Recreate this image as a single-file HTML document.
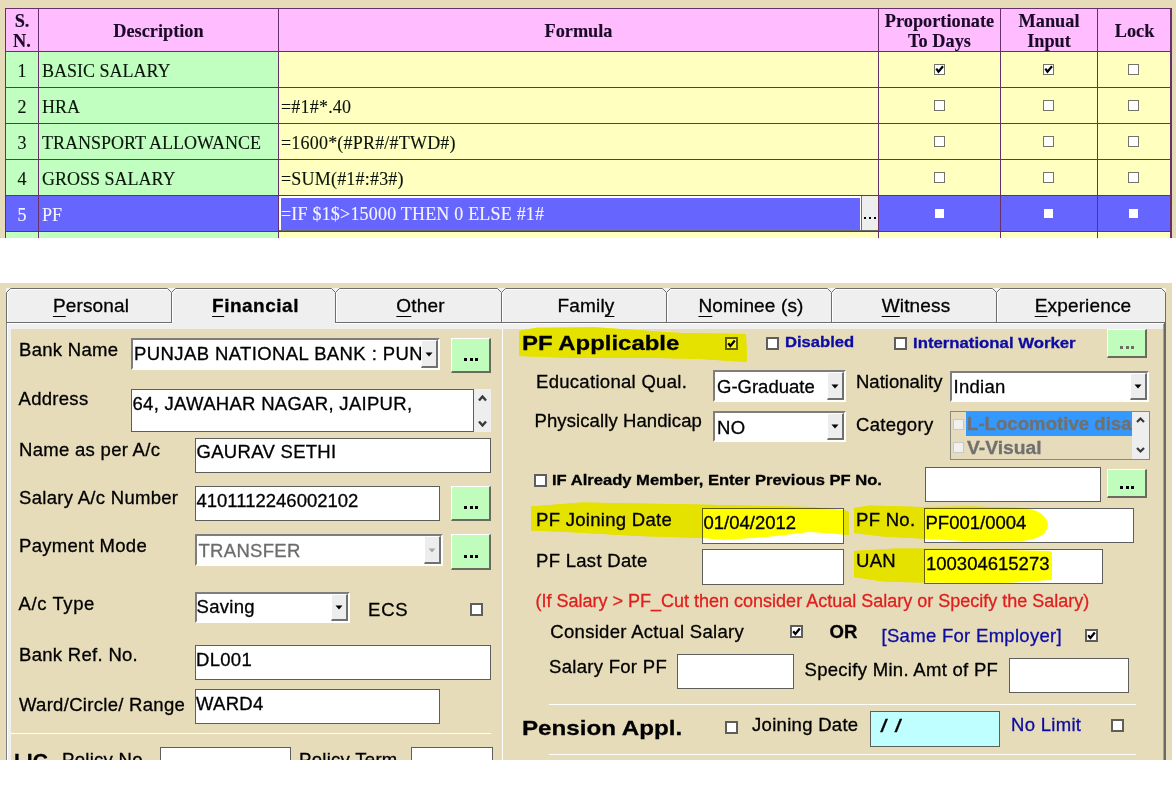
<!DOCTYPE html>
<html><head><meta charset="utf-8"><style>
html,body{margin:0;padding:0;}
body{width:1176px;height:788px;overflow:hidden;position:relative;background:#fff;}
.a{position:absolute;}
.t{position:absolute;white-space:nowrap;-webkit-text-stroke:0.3px currentColor;}
u{text-decoration:underline;text-underline-offset:3.5px;text-decoration-thickness:1.2px;}
</style></head><body>
<div class="a" style="left:0px;top:0px;width:1176px;height:238px;background:#E6DCBA;"></div>
<div class="a" style="left:5px;top:8px;width:1166px;height:43px;background:#FFBCFF;"></div>
<div class="a" style="left:5px;top:51px;width:273px;height:36px;background:#C0FFC0;"></div>
<div class="a" style="left:278px;top:51px;width:893px;height:36px;background:#FFFFC0;"></div>
<div class="a" style="left:5px;top:87px;width:273px;height:36px;background:#C0FFC0;"></div>
<div class="a" style="left:278px;top:87px;width:893px;height:36px;background:#FFFFC0;"></div>
<div class="a" style="left:5px;top:123px;width:273px;height:36px;background:#C0FFC0;"></div>
<div class="a" style="left:278px;top:123px;width:893px;height:36px;background:#FFFFC0;"></div>
<div class="a" style="left:5px;top:159px;width:273px;height:36px;background:#C0FFC0;"></div>
<div class="a" style="left:278px;top:159px;width:893px;height:36px;background:#FFFFC0;"></div>
<div class="a" style="left:5px;top:195px;width:1166px;height:36px;background:#6666FF;"></div>
<div class="a" style="left:5px;top:231px;width:273px;height:7px;background:#C0FFC0;"></div>
<div class="a" style="left:278px;top:231px;width:893px;height:7px;background:#FFFFC0;"></div>
<div class="a" style="left:5px;top:8px;width:1167px;height:1px;background:#683068;"></div>
<div class="a" style="left:5px;top:51px;width:1167px;height:1px;background:#683068;"></div>
<div class="a" style="left:5px;top:87px;width:1167px;height:1px;background:#683068;"></div>
<div class="a" style="left:5px;top:123px;width:1167px;height:1px;background:#683068;"></div>
<div class="a" style="left:5px;top:159px;width:1167px;height:1px;background:#683068;"></div>
<div class="a" style="left:5px;top:195px;width:1167px;height:1px;background:#683068;"></div>
<div class="a" style="left:5px;top:231px;width:1167px;height:1px;background:#683068;"></div>
<div class="a" style="left:5px;top:8px;width:1px;height:230px;background:#683068;"></div>
<div class="a" style="left:38px;top:8px;width:1px;height:230px;background:#683068;"></div>
<div class="a" style="left:278px;top:8px;width:1px;height:230px;background:#683068;"></div>
<div class="a" style="left:878px;top:8px;width:1px;height:230px;background:#683068;"></div>
<div class="a" style="left:1000px;top:8px;width:1px;height:230px;background:#683068;"></div>
<div class="a" style="left:1097px;top:8px;width:1px;height:230px;background:#683068;"></div>
<div class="a" style="left:1170px;top:8px;width:2px;height:230px;background:#683068;"></div>
<div class="t" style="top:11.68px;font-family:'Liberation Serif', serif;font-size:18.3px;line-height:18.3px;color:#1A0A28;font-weight:bold;left:5px;width:34px;text-align:center;-webkit-text-stroke:0.12px currentColor;">S.</div>
<div class="t" style="top:31.68px;font-family:'Liberation Serif', serif;font-size:18.3px;line-height:18.3px;color:#1A0A28;font-weight:bold;left:5px;width:34px;text-align:center;-webkit-text-stroke:0.12px currentColor;">N.</div>
<div class="t" style="top:21.68px;font-family:'Liberation Serif', serif;font-size:18.3px;line-height:18.3px;color:#1A0A28;font-weight:bold;left:38px;width:241px;text-align:center;-webkit-text-stroke:0.12px currentColor;">Description</div>
<div class="t" style="top:21.68px;font-family:'Liberation Serif', serif;font-size:18.3px;line-height:18.3px;color:#1A0A28;font-weight:bold;left:278px;width:601px;text-align:center;-webkit-text-stroke:0.12px currentColor;">Formula</div>
<div class="t" style="top:11.68px;font-family:'Liberation Serif', serif;font-size:18.3px;line-height:18.3px;color:#1A0A28;font-weight:bold;left:878px;width:123px;text-align:center;-webkit-text-stroke:0.12px currentColor;">Proportionate</div>
<div class="t" style="top:31.68px;font-family:'Liberation Serif', serif;font-size:18.3px;line-height:18.3px;color:#1A0A28;font-weight:bold;left:878px;width:123px;text-align:center;-webkit-text-stroke:0.12px currentColor;">To Days</div>
<div class="t" style="top:11.68px;font-family:'Liberation Serif', serif;font-size:18.3px;line-height:18.3px;color:#1A0A28;font-weight:bold;left:1000px;width:98px;text-align:center;-webkit-text-stroke:0.12px currentColor;">Manual</div>
<div class="t" style="top:31.68px;font-family:'Liberation Serif', serif;font-size:18.3px;line-height:18.3px;color:#1A0A28;font-weight:bold;left:1000px;width:98px;text-align:center;-webkit-text-stroke:0.12px currentColor;">Input</div>
<div class="t" style="top:21.68px;font-family:'Liberation Serif', serif;font-size:18.3px;line-height:18.3px;color:#1A0A28;font-weight:bold;left:1097px;width:75px;text-align:center;-webkit-text-stroke:0.12px currentColor;">Lock</div>
<div class="t" style="top:61.93px;font-family:'Liberation Serif', serif;font-size:18px;line-height:18px;color:#0A140A;left:5px;width:34px;text-align:center;-webkit-text-stroke:0.12px currentColor;">1</div>
<div class="t" style="top:61.93px;font-family:'Liberation Serif', serif;font-size:18px;line-height:18px;color:#0A140A;left:42px;-webkit-text-stroke:0.12px currentColor;">BASIC SALARY</div>
<div class="t" style="top:97.93px;font-family:'Liberation Serif', serif;font-size:18px;line-height:18px;color:#0A140A;left:5px;width:34px;text-align:center;-webkit-text-stroke:0.12px currentColor;">2</div>
<div class="t" style="top:97.93px;font-family:'Liberation Serif', serif;font-size:18px;line-height:18px;color:#0A140A;left:42px;-webkit-text-stroke:0.12px currentColor;">HRA</div>
<div class="t" style="top:97.93px;font-family:'Liberation Serif', serif;font-size:18px;line-height:18px;color:#0A140A;letter-spacing:0.2px;left:281px;-webkit-text-stroke:0.12px currentColor;">=#1#*.40</div>
<div class="t" style="top:133.93px;font-family:'Liberation Serif', serif;font-size:18px;line-height:18px;color:#0A140A;left:5px;width:34px;text-align:center;-webkit-text-stroke:0.12px currentColor;">3</div>
<div class="t" style="top:133.93px;font-family:'Liberation Serif', serif;font-size:18px;line-height:18px;color:#0A140A;left:42px;-webkit-text-stroke:0.12px currentColor;">TRANSPORT ALLOWANCE</div>
<div class="t" style="top:133.93px;font-family:'Liberation Serif', serif;font-size:18px;line-height:18px;color:#0A140A;letter-spacing:0.2px;left:281px;-webkit-text-stroke:0.12px currentColor;">=1600*(#PR#/#TWD#)</div>
<div class="t" style="top:169.93px;font-family:'Liberation Serif', serif;font-size:18px;line-height:18px;color:#0A140A;left:5px;width:34px;text-align:center;-webkit-text-stroke:0.12px currentColor;">4</div>
<div class="t" style="top:169.93px;font-family:'Liberation Serif', serif;font-size:18px;line-height:18px;color:#0A140A;left:42px;-webkit-text-stroke:0.12px currentColor;">GROSS SALARY</div>
<div class="t" style="top:169.93px;font-family:'Liberation Serif', serif;font-size:18px;line-height:18px;color:#0A140A;letter-spacing:0.2px;left:281px;-webkit-text-stroke:0.12px currentColor;">=SUM(#1#:#3#)</div>
<div class="a" style="left:934px;top:64px;width:11px;height:11px;background:#FFFFFF;box-sizing:border-box;border:1px solid #747468;"></div>
<svg class="a" style="left:934px;top:64px" width="11" height="11" viewBox="0 0 11 11"><path d="M2.3 4.6 L4.5 7.6 L9 2.2" fill="none" stroke="#000" stroke-width="2.2"/></svg>
<div class="a" style="left:1043px;top:64px;width:11px;height:11px;background:#FFFFFF;box-sizing:border-box;border:1px solid #747468;"></div>
<svg class="a" style="left:1043px;top:64px" width="11" height="11" viewBox="0 0 11 11"><path d="M2.3 4.6 L4.5 7.6 L9 2.2" fill="none" stroke="#000" stroke-width="2.2"/></svg>
<div class="a" style="left:1128px;top:64px;width:11px;height:11px;background:#FFFFFF;box-sizing:border-box;border:1px solid #747468;"></div>
<div class="a" style="left:934px;top:100px;width:11px;height:11px;background:#FFFFFF;box-sizing:border-box;border:1px solid #747468;"></div>
<div class="a" style="left:1043px;top:100px;width:11px;height:11px;background:#FFFFFF;box-sizing:border-box;border:1px solid #747468;"></div>
<div class="a" style="left:1128px;top:100px;width:11px;height:11px;background:#FFFFFF;box-sizing:border-box;border:1px solid #747468;"></div>
<div class="a" style="left:934px;top:136px;width:11px;height:11px;background:#FFFFFF;box-sizing:border-box;border:1px solid #747468;"></div>
<div class="a" style="left:1043px;top:136px;width:11px;height:11px;background:#FFFFFF;box-sizing:border-box;border:1px solid #747468;"></div>
<div class="a" style="left:1128px;top:136px;width:11px;height:11px;background:#FFFFFF;box-sizing:border-box;border:1px solid #747468;"></div>
<div class="a" style="left:934px;top:172px;width:11px;height:11px;background:#FFFFFF;box-sizing:border-box;border:1px solid #747468;"></div>
<div class="a" style="left:1043px;top:172px;width:11px;height:11px;background:#FFFFFF;box-sizing:border-box;border:1px solid #747468;"></div>
<div class="a" style="left:1128px;top:172px;width:11px;height:11px;background:#FFFFFF;box-sizing:border-box;border:1px solid #747468;"></div>
<div class="a" style="left:935px;top:209px;width:9px;height:9px;background:#FFFFFF;"></div>
<div class="a" style="left:1044px;top:209px;width:9px;height:9px;background:#FFFFFF;"></div>
<div class="a" style="left:1129px;top:209px;width:9px;height:9px;background:#FFFFFF;"></div>
<div class="t" style="top:205.93px;font-family:'Liberation Serif', serif;font-size:18px;line-height:18px;color:#F4F4FF;left:5px;width:34px;text-align:center;-webkit-text-stroke:0.12px currentColor;">5</div>
<div class="t" style="top:205.93px;font-family:'Liberation Serif', serif;font-size:18px;line-height:18px;color:#F4F4FF;left:42px;-webkit-text-stroke:0.12px currentColor;">PF</div>
<div class="a" style="left:279px;top:196px;width:582px;height:2px;background:#FFFFFF;"></div>
<div class="a" style="left:279px;top:196px;width:2px;height:35px;background:#FFFFFF;"></div>
<div class="a" style="left:279px;top:230px;width:599px;height:1px;background:#6A6A6A;"></div>
<div class="a" style="left:860px;top:196px;width:1px;height:34px;background:#FFFFFF;"></div>
<div class="a" style="left:861px;top:196px;width:1px;height:35px;background:#707070;"></div>
<div class="a" style="left:862px;top:196px;width:16px;height:34px;background:#EEEEEE;"></div>
<div class="a" style="left:864px;top:217px;width:2px;height:2px;background:#000;"></div>
<div class="a" style="left:869px;top:217px;width:2px;height:2px;background:#000;"></div>
<div class="a" style="left:874px;top:217px;width:2px;height:2px;background:#000;"></div>
<div class="t" style="top:204.93px;font-family:'Liberation Serif', serif;font-size:18px;line-height:18px;color:#F4F4FF;letter-spacing:0.2px;left:281px;-webkit-text-stroke:0.12px currentColor;">=IF $1$&gt;15000 THEN 0 ELSE #1#</div>
<div class="a" style="left:0px;top:283px;width:1172px;height:477px;background:#E6DCBA;"></div>
<div class="a" style="left:6px;top:322px;width:1160px;height:438px;background:#808080;"></div>
<div class="a" style="left:7px;top:323px;width:1157px;height:437px;background:#FFFFFF;"></div>
<div class="a" style="left:8px;top:324px;width:1155px;height:436px;background:#F0F0F0;"></div>
<div class="a" style="left:1163px;top:324px;width:2px;height:436px;background:#A0A0A0;"></div>
<div class="a" style="left:1164px;top:322px;width:2px;height:438px;background:#6A6A6A;"></div>
<div class="a" style="left:11px;top:329px;width:1152px;height:431px;background:#E6DCBA;"></div>
<svg class="a" style="left:0;top:0" width="1176" height="788" viewBox="0 0 1176 788"><path d="M519 331 L536 327.7 L595 327.3 L680 333 L746 334 L747 362 L701 359 L659 358 L574 358 L519 356 Z" fill="#E6E200"/><path d="M531 506.4 L582 502.5 L696 504.5 L810 507 L844 510 L849 512 L849 535 L810 532 L767 537 L724 540 L702 538 L639 536 L568 532 L531 530.6 Z" fill="#E6E200"/><path d="M854 508 L870 505.5 L921 507 L972 506.5 L1023 508 Q1045 510 1048 524 Q1048 538 1023 541 L972 541.5 L921 538.4 L883 536.6 L854 533 Z" fill="#E6E200"/><path d="M854 551 L896 548.6 L972 549 L1049 551 L1052 552 L1052 580 L998 583.4 L921 582.5 L883 581.5 L854 577 Z" fill="#E6E200"/></svg>
<svg class="a" style="left:0;top:0" width="1176" height="340" viewBox="0 0 1176 340"><rect x="6" y="288" width="1160" height="5" fill="#F4F4F2"/><path d="M6.5 323 V292.5 L10.5 288.5 H167.5 L171.5 292.5 V322" fill="#EFEFEF" stroke="#6E6E6E" stroke-width="1"/><path d="M7.5 322 V293 L11 289.5 H167" fill="none" stroke="#FFFFFF" stroke-width="1"/><path d="M171.5 323 V292.5 L175.5 288.5 H331.5 L335.5 292.5 V322" fill="#EFEFEF" stroke="#6E6E6E" stroke-width="1"/><path d="M172.5 322 V293 L176 289.5 H331" fill="none" stroke="#FFFFFF" stroke-width="1"/><path d="M335.5 323 V292.5 L339.5 288.5 H497.5 L501.5 292.5 V322" fill="#EFEFEF" stroke="#6E6E6E" stroke-width="1"/><path d="M336.5 322 V293 L340 289.5 H497" fill="none" stroke="#FFFFFF" stroke-width="1"/><path d="M501.5 323 V292.5 L505.5 288.5 H662.5 L666.5 292.5 V322" fill="#EFEFEF" stroke="#6E6E6E" stroke-width="1"/><path d="M502.5 322 V293 L506 289.5 H662" fill="none" stroke="#FFFFFF" stroke-width="1"/><path d="M666.5 323 V292.5 L670.5 288.5 H827.5 L831.5 292.5 V322" fill="#EFEFEF" stroke="#6E6E6E" stroke-width="1"/><path d="M667.5 322 V293 L671 289.5 H827" fill="none" stroke="#FFFFFF" stroke-width="1"/><path d="M831.5 323 V292.5 L835.5 288.5 H992.5 L996.5 292.5 V322" fill="#EFEFEF" stroke="#6E6E6E" stroke-width="1"/><path d="M832.5 322 V293 L836 289.5 H992" fill="none" stroke="#FFFFFF" stroke-width="1"/><path d="M996.5 323 V292.5 L1000.5 288.5 H1161.5 L1165.5 292.5 V322" fill="#EFEFEF" stroke="#6E6E6E" stroke-width="1"/><path d="M997.5 322 V293 L1001 289.5 H1161" fill="none" stroke="#FFFFFF" stroke-width="1"/></svg>
<div class="a" style="left:6px;top:322px;width:166px;height:1px;background:#6E6E6E;"></div>
<div class="a" style="left:335px;top:322px;width:167px;height:1px;background:#6E6E6E;"></div>
<div class="a" style="left:501px;top:322px;width:166px;height:1px;background:#6E6E6E;"></div>
<div class="a" style="left:666px;top:322px;width:166px;height:1px;background:#6E6E6E;"></div>
<div class="a" style="left:831px;top:322px;width:166px;height:1px;background:#6E6E6E;"></div>
<div class="a" style="left:996px;top:322px;width:170px;height:1px;background:#6E6E6E;"></div>
<div class="a" style="left:172px;top:322px;width:163px;height:7px;background:#EFEFEF;"></div>
<div class="t" style="top:295.51px;font-family:'Liberation Sans', sans-serif;font-size:19px;line-height:19px;color:#000;letter-spacing:0.15px;left:8.5px;width:165px;text-align:center;"><u>P</u>ersonal</div>
<div class="t" style="top:295.51px;font-family:'Liberation Sans', sans-serif;font-size:19px;line-height:19px;color:#000;font-weight:bold;letter-spacing:0.5px;left:173.5px;width:164px;text-align:center;"><u>F</u>inancial</div>
<div class="t" style="top:295.51px;font-family:'Liberation Sans', sans-serif;font-size:19px;line-height:19px;color:#000;letter-spacing:0.15px;left:337.5px;width:166px;text-align:center;"><u>O</u>ther</div>
<div class="t" style="top:295.51px;font-family:'Liberation Sans', sans-serif;font-size:19px;line-height:19px;color:#000;letter-spacing:0.15px;left:503.5px;width:165px;text-align:center;">Famil<u>y</u></div>
<div class="t" style="top:295.51px;font-family:'Liberation Sans', sans-serif;font-size:19px;line-height:19px;color:#000;letter-spacing:0.15px;left:668.5px;width:165px;text-align:center;"><u>N</u>ominee (s)</div>
<div class="t" style="top:295.51px;font-family:'Liberation Sans', sans-serif;font-size:19px;line-height:19px;color:#000;letter-spacing:0.15px;left:833.5px;width:165px;text-align:center;"><u>W</u>itness</div>
<div class="t" style="top:295.51px;font-family:'Liberation Sans', sans-serif;font-size:19px;line-height:19px;color:#000;letter-spacing:0.15px;left:998.5px;width:169px;text-align:center;"><u>E</u>xperience</div>
<div class="a" style="left:502px;top:329px;width:1px;height:431px;background:#FFFFFF;"></div>
<div class="t" style="top:340.64px;font-family:'Liberation Sans', sans-serif;font-size:18.5px;line-height:18.5px;color:#000;letter-spacing:0.3px;left:19px;">Bank Name</div>
<div class="a" style="left:131px;top:338px;width:309px;height:32px;box-sizing:border-box;background:#fff;border-style:solid;border-width:2px;border-color:#7E7E7E #FFFFFF #FFFFFF #7E7E7E;"></div>
<div class="a" style="left:421px;top:340px;width:17px;height:28px;box-sizing:border-box;background:#EDEDED;border-style:solid;border-width:1px 2px 2px 1px;border-color:#FFFFFF #707070 #707070 #FFFFFF;"></div>
<svg class="a" style="left:425.0px;top:351.5px" width="8" height="5" viewBox="0 0 8 5"><path d="M0.5 0.5 H7.5 L4 4.5 Z" fill="#000"/></svg>
<div class="t" style="left:134px;top:342px;width:287px;height:24px;overflow:hidden;font-family:'Liberation Sans', sans-serif;font-size:18.5px;line-height:24px;letter-spacing:0.4px;">PUNJAB NATIONAL BANK : PUNJAB</div>
<div class="a" style="left:451px;top:338px;width:40px;height:35px;box-sizing:border-box;background:#C0FCBC;border-style:solid;border-width:1px 2px 2px 1px;border-color:#FFFFFF #6A6A60 #6A6A60 #FFFFFF;"></div>
<div class="a" style="left:464px;top:358px;width:3px;height:3px;background:#000;"></div>
<div class="a" style="left:470px;top:358px;width:3px;height:3px;background:#000;"></div>
<div class="a" style="left:475px;top:358px;width:3px;height:3px;background:#000;"></div>
<div class="t" style="top:390.14px;font-family:'Liberation Sans', sans-serif;font-size:18.5px;line-height:18.5px;color:#000;letter-spacing:0.3px;left:18.5px;">Address</div>
<div class="a" style="left:131px;top:389px;width:343px;height:43px;background:#FFFFFF;box-sizing:border-box;border:1px solid #5E5E5E;"></div>
<div class="a" style="left:474px;top:389px;width:17px;height:43px;background:#EEEEEE;"></div>
<svg class="a" style="left:478px;top:393px" width="9" height="36" viewBox="0 0 9 36"><path d="M1 7.5 L4.5 3.5 L8 7.5" fill="none" stroke="#383838" stroke-width="2.4"/><path d="M1 28.5 L4.5 32.5 L8 28.5" fill="none" stroke="#383838" stroke-width="2.4"/></svg>
<div class="t" style="top:394.64px;font-family:'Liberation Sans', sans-serif;font-size:18.5px;line-height:18.5px;color:#000;letter-spacing:0.3px;left:132.5px;">64, JAWAHAR NAGAR, JAIPUR,</div>
<div class="t" style="top:440.64px;font-family:'Liberation Sans', sans-serif;font-size:18.5px;line-height:18.5px;color:#000;letter-spacing:0.3px;left:19px;">Name as per A/c</div>
<div class="a" style="left:195px;top:438px;width:296px;height:35px;background:#FFFFFF;box-sizing:border-box;border:1px solid #5E5E5E;"></div>
<div class="t" style="top:443.14px;font-family:'Liberation Sans', sans-serif;font-size:18.5px;line-height:18.5px;color:#000;letter-spacing:0.3px;left:196.5px;">GAURAV SETHI</div>
<div class="t" style="top:489.14px;font-family:'Liberation Sans', sans-serif;font-size:18.5px;line-height:18.5px;color:#000;letter-spacing:0.3px;left:19px;">Salary A/c Number</div>
<div class="a" style="left:195px;top:486px;width:245px;height:35px;background:#FFFFFF;box-sizing:border-box;border:1px solid #5E5E5E;"></div>
<div class="t" style="top:491.64px;font-family:'Liberation Sans', sans-serif;font-size:18.5px;line-height:18.5px;color:#000;left:196.5px;">4101112246002102</div>
<div class="a" style="left:451px;top:486px;width:40px;height:35px;box-sizing:border-box;background:#C0FCBC;border-style:solid;border-width:1px 2px 2px 1px;border-color:#FFFFFF #6A6A60 #6A6A60 #FFFFFF;"></div>
<div class="a" style="left:464px;top:506px;width:3px;height:3px;background:#000;"></div>
<div class="a" style="left:470px;top:506px;width:3px;height:3px;background:#000;"></div>
<div class="a" style="left:475px;top:506px;width:3px;height:3px;background:#000;"></div>
<div class="t" style="top:537.14px;font-family:'Liberation Sans', sans-serif;font-size:18.5px;line-height:18.5px;color:#000;letter-spacing:0.3px;left:19px;">Payment Mode</div>
<div class="a" style="left:195px;top:534px;width:248px;height:32px;box-sizing:border-box;background:#fff;border-style:solid;border-width:2px;border-color:#7E7E7E #FFFFFF #FFFFFF #7E7E7E;"></div>
<div class="a" style="left:424px;top:536px;width:17px;height:28px;box-sizing:border-box;background:#EDEDED;border-style:solid;border-width:1px 2px 2px 1px;border-color:#FFFFFF #707070 #707070 #FFFFFF;"></div>
<svg class="a" style="left:428.0px;top:547.5px" width="8" height="5" viewBox="0 0 8 5"><path d="M0.5 0.5 H7.5 L4 4.5 Z" fill="#A8A8A8"/></svg>
<div class="t" style="top:541.64px;font-family:'Liberation Sans', sans-serif;font-size:18.5px;line-height:18.5px;color:#6C6C6C;letter-spacing:0.3px;left:198.5px;">TRANSFER</div>
<div class="a" style="left:451px;top:534px;width:40px;height:36px;box-sizing:border-box;background:#C0FCBC;border-style:solid;border-width:1px 2px 2px 1px;border-color:#FFFFFF #6A6A60 #6A6A60 #FFFFFF;"></div>
<div class="a" style="left:464px;top:555px;width:3px;height:3px;background:#000;"></div>
<div class="a" style="left:470px;top:555px;width:3px;height:3px;background:#000;"></div>
<div class="a" style="left:475px;top:555px;width:3px;height:3px;background:#000;"></div>
<div class="t" style="top:595.14px;font-family:'Liberation Sans', sans-serif;font-size:18.5px;line-height:18.5px;color:#000;letter-spacing:0.6px;left:18.5px;">A/c Type</div>
<div class="a" style="left:195px;top:592px;width:155px;height:31px;box-sizing:border-box;background:#fff;border-style:solid;border-width:2px;border-color:#7E7E7E #FFFFFF #FFFFFF #7E7E7E;"></div>
<div class="a" style="left:331px;top:594px;width:17px;height:27px;box-sizing:border-box;background:#EDEDED;border-style:solid;border-width:1px 2px 2px 1px;border-color:#FFFFFF #707070 #707070 #FFFFFF;"></div>
<svg class="a" style="left:335.0px;top:605.0px" width="8" height="5" viewBox="0 0 8 5"><path d="M0.5 0.5 H7.5 L4 4.5 Z" fill="#000"/></svg>
<div class="t" style="top:598.14px;font-family:'Liberation Sans', sans-serif;font-size:18.5px;line-height:18.5px;color:#000;letter-spacing:0.3px;left:196.5px;">Saving</div>
<div class="t" style="top:600.64px;font-family:'Liberation Sans', sans-serif;font-size:18.5px;line-height:18.5px;color:#000;letter-spacing:0.8px;left:368px;">ECS</div>
<div class="a" style="left:470px;top:603px;width:13px;height:13px;background:#FFFFFF;box-sizing:border-box;border:2px solid #5E5E5E;"></div>
<div class="t" style="top:646.14px;font-family:'Liberation Sans', sans-serif;font-size:18.5px;line-height:18.5px;color:#000;letter-spacing:0.3px;left:19px;">Bank Ref. No.</div>
<div class="a" style="left:195px;top:645px;width:296px;height:35px;background:#FFFFFF;box-sizing:border-box;border:1px solid #5E5E5E;"></div>
<div class="t" style="top:651.14px;font-family:'Liberation Sans', sans-serif;font-size:18.5px;line-height:18.5px;color:#000;letter-spacing:0.3px;left:196px;">DL001</div>
<div class="t" style="top:695.64px;font-family:'Liberation Sans', sans-serif;font-size:18.5px;line-height:18.5px;color:#000;letter-spacing:0.3px;left:19px;">Ward/Circle/ Range</div>
<div class="a" style="left:195px;top:689px;width:245px;height:35px;background:#FFFFFF;box-sizing:border-box;border:1px solid #5E5E5E;"></div>
<div class="t" style="top:694.64px;font-family:'Liberation Sans', sans-serif;font-size:18.5px;line-height:18.5px;color:#000;letter-spacing:0.3px;left:196px;">WARD4</div>
<div class="a" style="left:11px;top:733px;width:480px;height:1px;background:#FFFFFF;"></div>
<div class="t" style="top:750.02px;font-family:'Liberation Sans', sans-serif;font-size:21px;line-height:21px;color:#000;font-weight:bold;left:14px;">LIC</div>
<div class="t" style="top:750.64px;font-family:'Liberation Sans', sans-serif;font-size:18.5px;line-height:18.5px;color:#000;letter-spacing:0.3px;left:62px;">Policy No</div>
<div class="a" style="left:160px;top:747px;width:131px;height:43px;background:#FFFFFF;box-sizing:border-box;border:1px solid #5E5E5E;"></div>
<div class="t" style="top:750.64px;font-family:'Liberation Sans', sans-serif;font-size:18.5px;line-height:18.5px;color:#000;letter-spacing:0.3px;left:299px;">Policy Term</div>
<div class="a" style="left:411px;top:747px;width:82px;height:43px;background:#FFFFFF;box-sizing:border-box;border:1px solid #5E5E5E;"></div>
<div class="t" style="top:332.32px;font-family:'Liberation Sans', sans-serif;font-size:21px;line-height:21px;color:#000;font-weight:bold;transform:scaleX(1.139);transform-origin:0 0;left:522px;">PF Applicable</div>
<div class="a" style="left:725px;top:337px;width:13px;height:13px;background:#FFFFFF;box-sizing:border-box;border:2px solid #5E5E5E;"></div>
<svg class="a" style="left:725px;top:337px" width="13" height="13" viewBox="0 0 13 13"><path d="M3.2 6.2 L5.4 9 L9.8 3.6" fill="none" stroke="#000" stroke-width="2.3"/></svg>
<div class="a" style="left:766px;top:337px;width:13px;height:13px;background:#FFFFFF;box-sizing:border-box;border:2px solid #5E5E5E;"></div>
<div class="t" style="top:334.48px;font-family:'Liberation Sans', sans-serif;font-size:15.5px;line-height:15.5px;color:#0C0CA4;font-weight:bold;transform:scaleX(1.071);transform-origin:0 0;left:784.5px;">Disabled</div>
<div class="a" style="left:894px;top:337px;width:13px;height:13px;background:#FFFFFF;box-sizing:border-box;border:2px solid #5E5E5E;"></div>
<div class="t" style="top:334.68px;font-family:'Liberation Sans', sans-serif;font-size:15.5px;line-height:15.5px;color:#0C0CA4;font-weight:bold;transform:scaleX(1.081);transform-origin:0 0;left:912.5px;">International Worker</div>
<div class="a" style="left:1107px;top:329px;width:40px;height:29px;box-sizing:border-box;background:#C0FCBC;border-style:solid;border-width:1px 2px 2px 1px;border-color:#FFFFFF #6A6A60 #6A6A60 #FFFFFF;"></div>
<div class="a" style="left:1120px;top:346px;width:3px;height:3px;background:#6E6E60;"></div>
<div class="a" style="left:1126px;top:346px;width:3px;height:3px;background:#6E6E60;"></div>
<div class="a" style="left:1131px;top:346px;width:3px;height:3px;background:#6E6E60;"></div>
<div class="t" style="top:372.64px;font-family:'Liberation Sans', sans-serif;font-size:18.5px;line-height:18.5px;color:#000;letter-spacing:0.3px;left:536px;">Educational Qual.</div>
<div class="a" style="left:713px;top:370px;width:133px;height:32px;box-sizing:border-box;background:#fff;border-style:solid;border-width:2px;border-color:#7E7E7E #FFFFFF #FFFFFF #7E7E7E;"></div>
<div class="a" style="left:827px;top:372px;width:17px;height:28px;box-sizing:border-box;background:#EDEDED;border-style:solid;border-width:1px 2px 2px 1px;border-color:#FFFFFF #707070 #707070 #FFFFFF;"></div>
<svg class="a" style="left:831.0px;top:383.5px" width="8" height="5" viewBox="0 0 8 5"><path d="M0.5 0.5 H7.5 L4 4.5 Z" fill="#000"/></svg>
<div class="t" style="top:378.14px;font-family:'Liberation Sans', sans-serif;font-size:18.5px;line-height:18.5px;color:#000;left:717px;">G-Graduate</div>
<div class="t" style="top:373.14px;font-family:'Liberation Sans', sans-serif;font-size:18.5px;line-height:18.5px;color:#000;left:856px;">Nationality</div>
<div class="a" style="left:950px;top:371px;width:199px;height:31px;box-sizing:border-box;background:#fff;border-style:solid;border-width:2px;border-color:#7E7E7E #FFFFFF #FFFFFF #7E7E7E;"></div>
<div class="a" style="left:1130px;top:373px;width:17px;height:27px;box-sizing:border-box;background:#EDEDED;border-style:solid;border-width:1px 2px 2px 1px;border-color:#FFFFFF #707070 #707070 #FFFFFF;"></div>
<svg class="a" style="left:1134.0px;top:384.0px" width="8" height="5" viewBox="0 0 8 5"><path d="M0.5 0.5 H7.5 L4 4.5 Z" fill="#000"/></svg>
<div class="t" style="top:378.14px;font-family:'Liberation Sans', sans-serif;font-size:18.5px;line-height:18.5px;color:#000;letter-spacing:0.3px;left:953.5px;">Indian</div>
<div class="t" style="top:412.14px;font-family:'Liberation Sans', sans-serif;font-size:18.5px;line-height:18.5px;color:#000;letter-spacing:0.1px;left:534.5px;">Physically Handicap</div>
<div class="a" style="left:713px;top:411px;width:133px;height:31px;box-sizing:border-box;background:#fff;border-style:solid;border-width:2px;border-color:#7E7E7E #FFFFFF #FFFFFF #7E7E7E;"></div>
<div class="a" style="left:827px;top:413px;width:17px;height:27px;box-sizing:border-box;background:#EDEDED;border-style:solid;border-width:1px 2px 2px 1px;border-color:#FFFFFF #707070 #707070 #FFFFFF;"></div>
<svg class="a" style="left:831.0px;top:424.0px" width="8" height="5" viewBox="0 0 8 5"><path d="M0.5 0.5 H7.5 L4 4.5 Z" fill="#000"/></svg>
<div class="t" style="top:419.14px;font-family:'Liberation Sans', sans-serif;font-size:18.5px;line-height:18.5px;color:#000;letter-spacing:0.3px;left:717px;">NO</div>
<div class="t" style="top:415.64px;font-family:'Liberation Sans', sans-serif;font-size:18.5px;line-height:18.5px;color:#000;letter-spacing:0.3px;left:856px;">Category</div>
<div class="a" style="left:950px;top:411px;width:200px;height:49px;background:#E6DCBC;box-sizing:border-box;border:1px solid #8A8A80;"></div>
<div class="a" style="left:966px;top:412px;width:166px;height:24px;background:#3399FF;"></div>
<div class="a" style="left:1132px;top:412px;width:17px;height:47px;background:#EEEEEE;"></div>
<svg class="a" style="left:1136px;top:415px" width="9" height="42" viewBox="0 0 9 42"><path d="M1 7 L4.5 3.5 L8 7" fill="none" stroke="#383838" stroke-width="2.2"/><path d="M1 33 L4.5 36.5 L8 33" fill="none" stroke="#383838" stroke-width="2.2"/></svg>
<div class="a" style="left:953px;top:419px;width:11px;height:11px;background:#F0F0F0;box-sizing:border-box;border:1px solid #C8C8C8;"></div>
<div class="a" style="left:953px;top:442px;width:11px;height:11px;background:#F0F0F0;box-sizing:border-box;border:1px solid #C8C8C8;"></div>
<div class="a" style="left:966px;top:412px;width:166px;height:24px;overflow:hidden;"><div class="t" style="left:1px;top:0px;font-family:'Liberation Sans', sans-serif;font-size:18px;font-weight:bold;color:#707070;line-height:24px;transform:scaleX(1.035);transform-origin:0 0;">L-Locomotive disability</div></div>
<div class="t" style="top:439.26px;font-family:'Liberation Sans', sans-serif;font-size:18px;line-height:18px;color:#707070;font-weight:bold;transform:scaleX(1.07);transform-origin:0 0;left:967px;">V-Visual</div>
<div class="a" style="left:534px;top:474px;width:13px;height:13px;background:#FFFFFF;box-sizing:border-box;border:2px solid #5E5E5E;"></div>
<div class="t" style="top:471.58px;font-family:'Liberation Sans', sans-serif;font-size:15.5px;line-height:15.5px;color:#000;font-weight:bold;transform:scaleX(1.069);transform-origin:0 0;left:552px;">IF Already Member, Enter Previous PF No.</div>
<div class="a" style="left:925px;top:467px;width:176px;height:35px;background:#FFFFFF;box-sizing:border-box;border:1px solid #5E5E5E;"></div>
<div class="a" style="left:1107px;top:469px;width:40px;height:29px;box-sizing:border-box;background:#C0FCBC;border-style:solid;border-width:1px 2px 2px 1px;border-color:#FFFFFF #6A6A60 #6A6A60 #FFFFFF;"></div>
<div class="a" style="left:1120px;top:486px;width:3px;height:3px;background:#000;"></div>
<div class="a" style="left:1126px;top:486px;width:3px;height:3px;background:#000;"></div>
<div class="a" style="left:1131px;top:486px;width:3px;height:3px;background:#000;"></div>
<div class="t" style="top:510.84px;font-family:'Liberation Sans', sans-serif;font-size:18.5px;line-height:18.5px;color:#000;letter-spacing:0.3px;left:536px;">PF Joining Date</div>
<div class="a" style="left:702px;top:508px;width:142px;height:36px;background:#FFFFFF;box-sizing:border-box;border:1px solid #5E5E5E;"></div>
<div class="t" style="top:513.64px;font-family:'Liberation Sans', sans-serif;font-size:18.5px;line-height:18.5px;color:#000;left:703.5px;">01/04/2012</div>
<div class="t" style="top:510.84px;font-family:'Liberation Sans', sans-serif;font-size:18.5px;line-height:18.5px;color:#000;letter-spacing:0.3px;left:856px;">PF No.</div>
<div class="a" style="left:924px;top:508px;width:210px;height:35px;background:#FFFFFF;box-sizing:border-box;border:1px solid #5E5E5E;"></div>
<div class="t" style="top:513.64px;font-family:'Liberation Sans', sans-serif;font-size:18.5px;line-height:18.5px;color:#000;left:925.5px;">PF001/0004</div>
<div class="t" style="top:551.74px;font-family:'Liberation Sans', sans-serif;font-size:18.5px;line-height:18.5px;color:#000;letter-spacing:0.3px;left:536px;">PF Last Date</div>
<div class="a" style="left:702px;top:549px;width:142px;height:36px;background:#FFFFFF;box-sizing:border-box;border:1px solid #5E5E5E;"></div>
<div class="t" style="top:551.74px;font-family:'Liberation Sans', sans-serif;font-size:18.5px;line-height:18.5px;color:#000;letter-spacing:0.3px;left:856px;">UAN</div>
<div class="a" style="left:924px;top:549px;width:179px;height:35px;background:#FFFFFF;box-sizing:border-box;border:1px solid #5E5E5E;"></div>
<div class="t" style="top:554.64px;font-family:'Liberation Sans', sans-serif;font-size:18.5px;line-height:18.5px;color:#000;left:926px;">100304615273</div>
<div class="t" style="top:591.76px;font-family:'Liberation Sans', sans-serif;font-size:18px;line-height:18px;color:#E01E1E;left:535.5px;">(If Salary &gt; PF_Cut then consider Actual Salary or Specify the Salary)</div>
<div class="t" style="top:622.84px;font-family:'Liberation Sans', sans-serif;font-size:18.5px;line-height:18.5px;color:#000;letter-spacing:0.3px;left:550.3px;">Consider Actual Salary</div>
<div class="a" style="left:790px;top:625px;width:13px;height:13px;background:#FFFFFF;box-sizing:border-box;border:2px solid #5E5E5E;"></div>
<svg class="a" style="left:790px;top:625px" width="13" height="13" viewBox="0 0 13 13"><path d="M3.2 6.2 L5.4 9 L9.8 3.6" fill="none" stroke="#000" stroke-width="2.3"/></svg>
<div class="t" style="top:623.34px;font-family:'Liberation Sans', sans-serif;font-size:18.5px;line-height:18.5px;color:#000;font-weight:bold;left:829.5px;">OR</div>
<div class="t" style="top:626.94px;font-family:'Liberation Sans', sans-serif;font-size:18.5px;line-height:18.5px;color:#0C0CA4;letter-spacing:0.3px;left:881.5px;">[Same For Employer]</div>
<div class="a" style="left:1085px;top:629px;width:13px;height:13px;background:#FFFFFF;box-sizing:border-box;border:2px solid #5E5E5E;"></div>
<svg class="a" style="left:1085px;top:629px" width="13" height="13" viewBox="0 0 13 13"><path d="M3.2 6.2 L5.4 9 L9.8 3.6" fill="none" stroke="#000" stroke-width="2.3"/></svg>
<div class="t" style="top:657.94px;font-family:'Liberation Sans', sans-serif;font-size:18.5px;line-height:18.5px;color:#000;letter-spacing:0.3px;left:549px;">Salary For PF</div>
<div class="a" style="left:677px;top:654px;width:117px;height:35px;background:#FFFFFF;box-sizing:border-box;border:1px solid #5E5E5E;"></div>
<div class="t" style="top:661.14px;font-family:'Liberation Sans', sans-serif;font-size:18.5px;line-height:18.5px;color:#000;letter-spacing:0.3px;left:804.5px;">Specify Min. Amt of PF</div>
<div class="a" style="left:1009px;top:658px;width:120px;height:35px;background:#FFFFFF;box-sizing:border-box;border:1px solid #5E5E5E;"></div>
<div class="a" style="left:549px;top:704px;width:587px;height:1px;background:#FFFFFF;"></div>
<div class="t" style="top:716.82px;font-family:'Liberation Sans', sans-serif;font-size:21px;line-height:21px;color:#000;font-weight:bold;transform:scaleX(1.151);transform-origin:0 0;left:522px;">Pension Appl.</div>
<div class="a" style="left:725px;top:721px;width:13px;height:13px;background:#FFFFFF;box-sizing:border-box;border:2px solid #5E5E5E;"></div>
<div class="t" style="top:715.94px;font-family:'Liberation Sans', sans-serif;font-size:18.5px;line-height:18.5px;color:#000;letter-spacing:0.3px;left:752px;">Joining Date</div>
<div class="a" style="left:870px;top:711px;width:130px;height:36px;background:#C0FFFF;box-sizing:border-box;border:1px solid #5E5E5E;"></div>
<div class="t" style="top:717.14px;font-family:'Liberation Sans', sans-serif;font-size:18.5px;line-height:18.5px;color:#000;letter-spacing:0.3px;left:881px;font-style:italic;font-weight:bold;letter-spacing:2px;">/ /</div>
<div class="t" style="top:716.44px;font-family:'Liberation Sans', sans-serif;font-size:18.5px;line-height:18.5px;color:#0C0CA4;letter-spacing:0.3px;left:1011px;">No Limit</div>
<div class="a" style="left:1111px;top:719px;width:13px;height:13px;background:#FFFFFF;box-sizing:border-box;border:2px solid #5E5E5E;"></div>
<div class="a" style="left:549px;top:754px;width:587px;height:1px;background:#FFFFFF;"></div>
<svg class="a" style="left:0;top:0;mix-blend-mode:multiply" width="1176" height="788" viewBox="0 0 1176 788"><path d="M519 331 L536 327.7 L595 327.3 L680 333 L746 334 L747 362 L701 359 L659 358 L574 358 L519 356 Z" fill="#FFFF00"/><path d="M531 506.4 L582 502.5 L696 504.5 L810 507 L844 510 L849 512 L849 535 L810 532 L767 537 L724 540 L702 538 L639 536 L568 532 L531 530.6 Z" fill="#FFFF00"/><path d="M854 508 L870 505.5 L921 507 L972 506.5 L1023 508 Q1045 510 1048 524 Q1048 538 1023 541 L972 541.5 L921 538.4 L883 536.6 L854 533 Z" fill="#FFFF00"/><path d="M854 551 L896 548.6 L972 549 L1049 551 L1052 552 L1052 580 L998 583.4 L921 582.5 L883 581.5 L854 577 Z" fill="#FFFF00"/></svg>
<div class="a" style="left:0px;top:760px;width:1176px;height:28px;background:#FFFFFF;"></div>
<div class="a" style="left:1172px;top:283px;width:4px;height:477px;background:#FFFFFF;"></div>
</body></html>
